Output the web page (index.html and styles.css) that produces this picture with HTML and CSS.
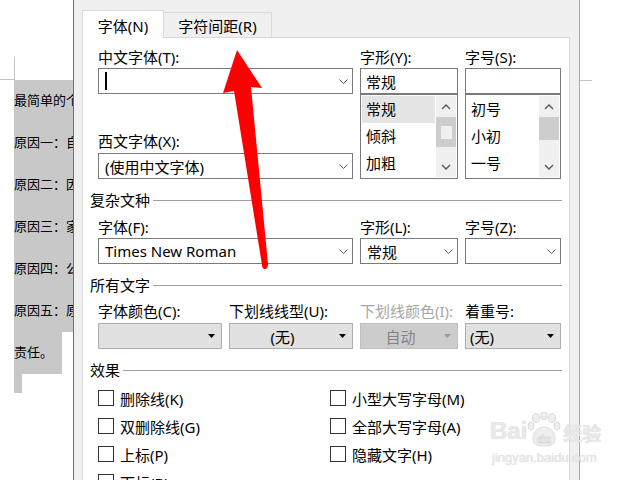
FILE: index.html
```html
<!DOCTYPE html>
<html lang="zh-CN">
<head>
    <meta charset="UTF-8">
    <title>字体</title>
    <link rel="stylesheet" href="styles.css">
</head>
<body>

    <div class="desk">
        <!-- Document behind the dialog -->
        <div class="doc doc-left">
            <div class="corner"></div>
            <div class="selection">
                <p>最简单的个</p>
                <p>原因一：自</p>
                <p>原因二：因</p>
                <p>原因三：家</p>
                <p>原因四：公</p>
                <p>原因五：原</p>
                <p class="short">责任。</p>
                <p class="mark"></p>
            </div>
        </div>

        <!-- Font dialog -->
        <div class="dialog">
            <div class="tabs">
                <div class="tab active">字体(N)</div>
                <div class="tab">字符间距(R)</div>
            </div>

            <div class="panel">
                <div class="fields top">
                    <div class="field wide">
                        <div class="label">中文字体(T):</div>
                        <div class="combo">
                            <span class="value"><span class="caret"></span></span>
                            <svg class="chev" viewBox="0 0 9 5"><path d="M0.5 0.5 L4.5 4.5 L8.5 0.5"/></svg>
                        </div>
                        <div class="label second">西文字体(X):</div>
                        <div class="combo">
                            <span class="value">(使用中文字体)</span>
                            <svg class="chev" viewBox="0 0 9 5"><path d="M0.5 0.5 L4.5 4.5 L8.5 0.5"/></svg>
                        </div>
                    </div>
                    <div class="field">
                        <div class="label">字形(Y):</div>
                        <div class="input">常规</div>
                        <div class="listbox">
                            <div class="items">
                                <div class="item current">常规</div>
                                <div class="item">倾斜</div>
                                <div class="item">加粗</div>
                            </div>
                            <div class="scroll">
                                <div class="arrow-btn"><svg viewBox="0 0 10 6"><path d="M1 5 L5 1 L9 5"/></svg></div>
                                <div class="thumb focused"><span></span></div>
                                <div class="track"></div>
                                <div class="arrow-btn"><svg viewBox="0 0 10 6"><path d="M1 1 L5 5 L9 1"/></svg></div>
                            </div>
                        </div>
                    </div>
                    <div class="field">
                        <div class="label">字号(S):</div>
                        <div class="input"></div>
                        <div class="listbox">
                            <div class="items">
                                <div class="item">初号</div>
                                <div class="item">小初</div>
                                <div class="item">一号</div>
                            </div>
                            <div class="scroll">
                                <div class="arrow-btn"><svg viewBox="0 0 10 6"><path d="M1 5 L5 1 L9 5"/></svg></div>
                                <div class="thumb small"></div>
                                <div class="track"></div>
                                <div class="arrow-btn"><svg viewBox="0 0 10 6"><path d="M1 1 L5 5 L9 1"/></svg></div>
                            </div>
                        </div>
                    </div>
                </div>

                <div class="group">复杂文种</div>
                <div class="fields">
                    <div class="field wide">
                        <div class="label">字体(F):</div>
                        <div class="combo">
                            <span class="value">Times New Roman</span>
                            <svg class="chev" viewBox="0 0 9 5"><path d="M0.5 0.5 L4.5 4.5 L8.5 0.5"/></svg>
                        </div>
                    </div>
                    <div class="field">
                        <div class="label">字形(L):</div>
                        <div class="combo">
                            <span class="value">常规</span>
                            <svg class="chev" viewBox="0 0 9 5"><path d="M0.5 0.5 L4.5 4.5 L8.5 0.5"/></svg>
                        </div>
                    </div>
                    <div class="field">
                        <div class="label">字号(Z):</div>
                        <div class="combo">
                            <span class="value"></span>
                            <svg class="chev" viewBox="0 0 9 5"><path d="M0.5 0.5 L4.5 4.5 L8.5 0.5"/></svg>
                        </div>
                    </div>
                </div>

                <div class="group">所有文字</div>
                <div class="fields colors">
                    <div class="field">
                        <div class="label">字体颜色(C):</div>
                        <div class="btn">
                            <span class="value"></span>
                            <svg class="tri" viewBox="0 0 7 4"><path d="M0 0H7L3.5 4Z"/></svg>
                        </div>
                    </div>
                    <div class="field">
                        <div class="label">下划线线型(U):</div>
                        <div class="btn">
                            <span class="value">(无)</span>
                            <svg class="tri" viewBox="0 0 7 4"><path d="M0 0H7L3.5 4Z"/></svg>
                        </div>
                    </div>
                    <div class="field disabled">
                        <div class="label">下划线颜色(I):</div>
                        <div class="btn">
                            <span class="value">自动</span>
                            <svg class="tri" viewBox="0 0 7 4"><path d="M0 0H7L3.5 4Z"/></svg>
                        </div>
                    </div>
                    <div class="field">
                        <div class="label">着重号:</div>
                        <div class="btn left">
                            <span class="value">(无)</span>
                            <svg class="tri" viewBox="0 0 7 4"><path d="M0 0H7L3.5 4Z"/></svg>
                        </div>
                    </div>
                </div>

                <div class="group">效果</div>
                <div class="checks">
                    <div class="check"><span class="box"></span>删除线(K)</div>
                    <div class="check"><span class="box"></span>小型大写字母(M)</div>
                    <div class="check"><span class="box"></span>双删除线(G)</div>
                    <div class="check"><span class="box"></span>全部大写字母(A)</div>
                    <div class="check"><span class="box"></span>上标(P)</div>
                    <div class="check"><span class="box"></span>隐藏文字(H)</div>
                    <div class="check"><span class="box"></span>下标(B)</div>
                </div>
            </div>
        </div>

        <div class="doc doc-right">
            <div class="corner-right"></div>
        </div>
    </div>

    <!-- Red annotation arrow -->
    <svg class="annotation" viewBox="0 0 640 480">
        <path d="M237 50 L262 88 L251 87 L268 264 Q268 269 265 269 Q262 269 262 265 L234 91 L223 93 Z"/>
    </svg>

    <!-- Baidu watermark -->
    <div class="watermark">
        <div class="wm-top">
            <span class="wm-bai">Bai</span>
            <span class="wm-paw">
                <svg viewBox="0 0 34 36">
                    <ellipse cx="9" cy="6" rx="3.5" ry="4.5"/>
                    <ellipse cx="17" cy="4" rx="3.5" ry="4"/>
                    <ellipse cx="25" cy="6" rx="3.5" ry="4.5"/>
                    <ellipse cx="4" cy="14" rx="3" ry="4"/>
                    <ellipse cx="30" cy="14" rx="3" ry="4"/>
                    <path d="M6 28 Q6 16 17 15 Q28 16 28 28 Q28 34 17 34 Q6 34 6 28 Z"/>
                    <text x="17" y="31" text-anchor="middle">du</text>
                </svg>
            </span>
            <span class="wm-jy">经验</span>
        </div>
        <div class="wm-url">jingyan.baidu.com</div>
    </div>

</body>
</html>
```

FILE: styles.css
```css
body {
    margin: 0;
    font-family: "Noto Sans", "Noto Sans CJK SC", sans-serif;
    font-size: 15px;
    color: #000;
    background-color: #fff;
    overflow: hidden;
}
.desk {
    display: flex;
    height: 480px;
    overflow: hidden;
}

/* document behind */
.doc-left {
    width: 73px;
    flex-shrink: 0;
    overflow: hidden;
}
.corner {
    width: 15px;
    height: 23px;
    margin-top: 57px;
    border-right: 1px solid #c4c4c4;
    border-bottom: 1px solid #c4c4c4;
    box-sizing: border-box;
}
.selection {
    margin-left: 14px;
    font-family: "Noto Sans CJK SC", sans-serif;
    font-size: 13px;
}
.selection p {
    margin: 0;
    height: 42px;
    line-height: 40px;
    background-color: #c8c8c8;
    white-space: nowrap;
    overflow: hidden;
}
.selection p.short {
    width: 48px;
}
.selection p.mark {
    width: 8px;
    height: 19px;
}
.doc-right {
    flex: 1;
}
.corner-right {
    width: 12px;
    height: 1px;
    margin-top: 80px;
    background-color: #c4c4c4;
}

/* dialog */
.dialog {
    width: 507px;
    flex-shrink: 0;
    box-sizing: border-box;
    background-color: #f0f0f0;
    border-left: 1px solid #707070;
    border-right: 1px solid #a8a8a8;
    padding: 10px 9px 0 8px;
    display: flex;
    flex-direction: column;
}
.tabs {
    display: flex;
    align-items: flex-end;
    height: 27px;
}
.tab {
    box-sizing: border-box;
    height: 25px;
    width: 109px;
    margin-left: -1px;
    padding-top: 2px;
    line-height: 23px;
    text-align: center;
    border: 1px solid #d9d9d9;
    border-bottom: none;
    background-color: #f0f0f0;
    white-space: nowrap;
}
.tab.active {
    position: relative;
    z-index: 1;
    width: 82px;
    height: 28px;
    margin-left: 0;
    margin-bottom: -1px;
    line-height: 26px;
    background-color: #fff;
}
.panel {
    flex: 1;
    background-color: #fff;
    border: 1px solid #d9d9d9;
    padding: 9px 7px 0 7px;
}

.fields {
    display: grid;
    grid-template-columns: 124px 124px 98px 96px;
    column-gap: 7px;
    margin-left: 8px;
    margin-top: 7px;
}
.fields.top {
    margin-top: 0;
}
.fields.colors {
    margin-top: 6px;
}
.field {
    display: flex;
    flex-direction: column;
}
.wide {
    grid-column: span 2;
}
.label {
    height: 20px;
    line-height: 20px;
    margin-bottom: 1px;
    white-space: nowrap;
}
.label.second {
    margin-top: 37px;
    margin-bottom: 2px;
}
.colors .label {
    margin-bottom: 2px;
}
.disabled .label {
    color: #a6a6a6;
}

.combo, .input {
    height: 26px;
    box-sizing: border-box;
    border: 1px solid #7a7a7a;
    background-color: #fff;
    display: flex;
    align-items: center;
    white-space: nowrap;
}
.combo .value, .input {
    padding-left: 6px;
}
.combo .value {
    flex: 1;
    display: flex;
    align-items: center;
}
.input {
    padding-left: 5px;
}
.caret {
    width: 2px;
    height: 18px;
    background-color: #000;
}
.chev {
    width: 9px;
    height: 5px;
    margin-right: 4px;
    fill: none;
    stroke: #555;
    stroke-width: 1;
}

.listbox {
    height: 85px;
    box-sizing: border-box;
    border: 1px solid #7a7a7a;
    padding: 1px;
    display: flex;
}
.items {
    flex: 1;
    padding-right: 1px;
}
.item {
    height: 27px;
    line-height: 26px;
    padding-left: 4px;
}
.item.current {
    background-color: #e5e5e5;
}
.scroll {
    width: 20px;
    background-color: #f0f0f0;
    display: flex;
    flex-direction: column;
}
.arrow-btn {
    height: 21px;
    display: flex;
    align-items: center;
    justify-content: center;
}
.arrow-btn svg {
    width: 10px;
    height: 6px;
    fill: none;
    stroke: #606060;
    stroke-width: 1.5;
}
.thumb {
    height: 30px;
    background-color: #cdcdcd;
    display: flex;
    align-items: center;
    justify-content: center;
}
.thumb.focused span {
    width: 11px;
    height: 13px;
    background-color: #f0f0f0;
}
.thumb.small {
    height: 23px;
}
.track {
    flex: 1;
}

.btn {
    height: 26px;
    box-sizing: border-box;
    border: 1px solid #adadad;
    background-color: #e1e1e1;
    display: flex;
    align-items: center;
    white-space: nowrap;
}
.btn .value {
    flex: 1;
    text-align: center;
}
.btn.left .value {
    text-align: left;
    padding-left: 4px;
}
.tri {
    width: 7px;
    height: 4px;
    margin: 0 6px 0 4px;
    fill: #000;
}
.disabled .btn {
    background-color: #cccccc;
    border-color: #bfbfbf;
    color: #838383;
}
.disabled .tri {
    fill: #9a9a9a;
}

.group {
    display: flex;
    align-items: center;
    height: 20px;
    line-height: 20px;
    margin-top: 11px;
    white-space: nowrap;
}
.group::after {
    content: "";
    flex: 1;
    height: 1px;
    margin-left: 3px;
    background-color: #a0a0a0;
}

.checks {
    display: grid;
    grid-template-columns: 232px 1fr;
    margin-left: 8px;
    margin-top: 4px;
}
.check {
    display: flex;
    align-items: center;
    height: 28px;
    white-space: nowrap;
}
.box {
    width: 16px;
    height: 16px;
    box-sizing: border-box;
    border: 1px solid #333;
    margin-right: 6px;
}

/* overlays */
.annotation {
    position: absolute;
    left: 0;
    top: 0;
    width: 640px;
    height: 480px;
    pointer-events: none;
    fill: #ff0000;
}
.watermark {
    position: absolute;
    left: 490px;
    top: 410px;
    color: #e8e8e8;
    text-shadow: 0 0 1px #cfcfcf;
    pointer-events: none;
}
.wm-top {
    display: flex;
    align-items: flex-end;
    height: 38px;
}
.wm-bai {
    font-family: "Liberation Sans", sans-serif;
    font-weight: bold;
    font-size: 24px;
    line-height: 24px;
    margin-bottom: 5px;
}
.wm-paw svg {
    display: block;
    width: 34px;
    height: 36px;
    fill: #eeeeee;
    stroke: #d6d6d6;
    stroke-width: 0.8;
}
.wm-paw text {
    font-family: "Liberation Sans", sans-serif;
    font-weight: bold;
    font-size: 11px;
    fill: #fff;
    stroke: #d6d6d6;
    stroke-width: 0.5;
}
.wm-jy {
    font-family: "Noto Sans CJK SC", sans-serif;
    font-weight: bold;
    font-size: 19px;
    line-height: 24px;
    margin-left: 2px;
    margin-bottom: 3px;
}
.wm-url {
    font-family: "Liberation Sans", sans-serif;
    font-size: 13px;
    margin-top: 2px;
    margin-left: 2px;
}
```
